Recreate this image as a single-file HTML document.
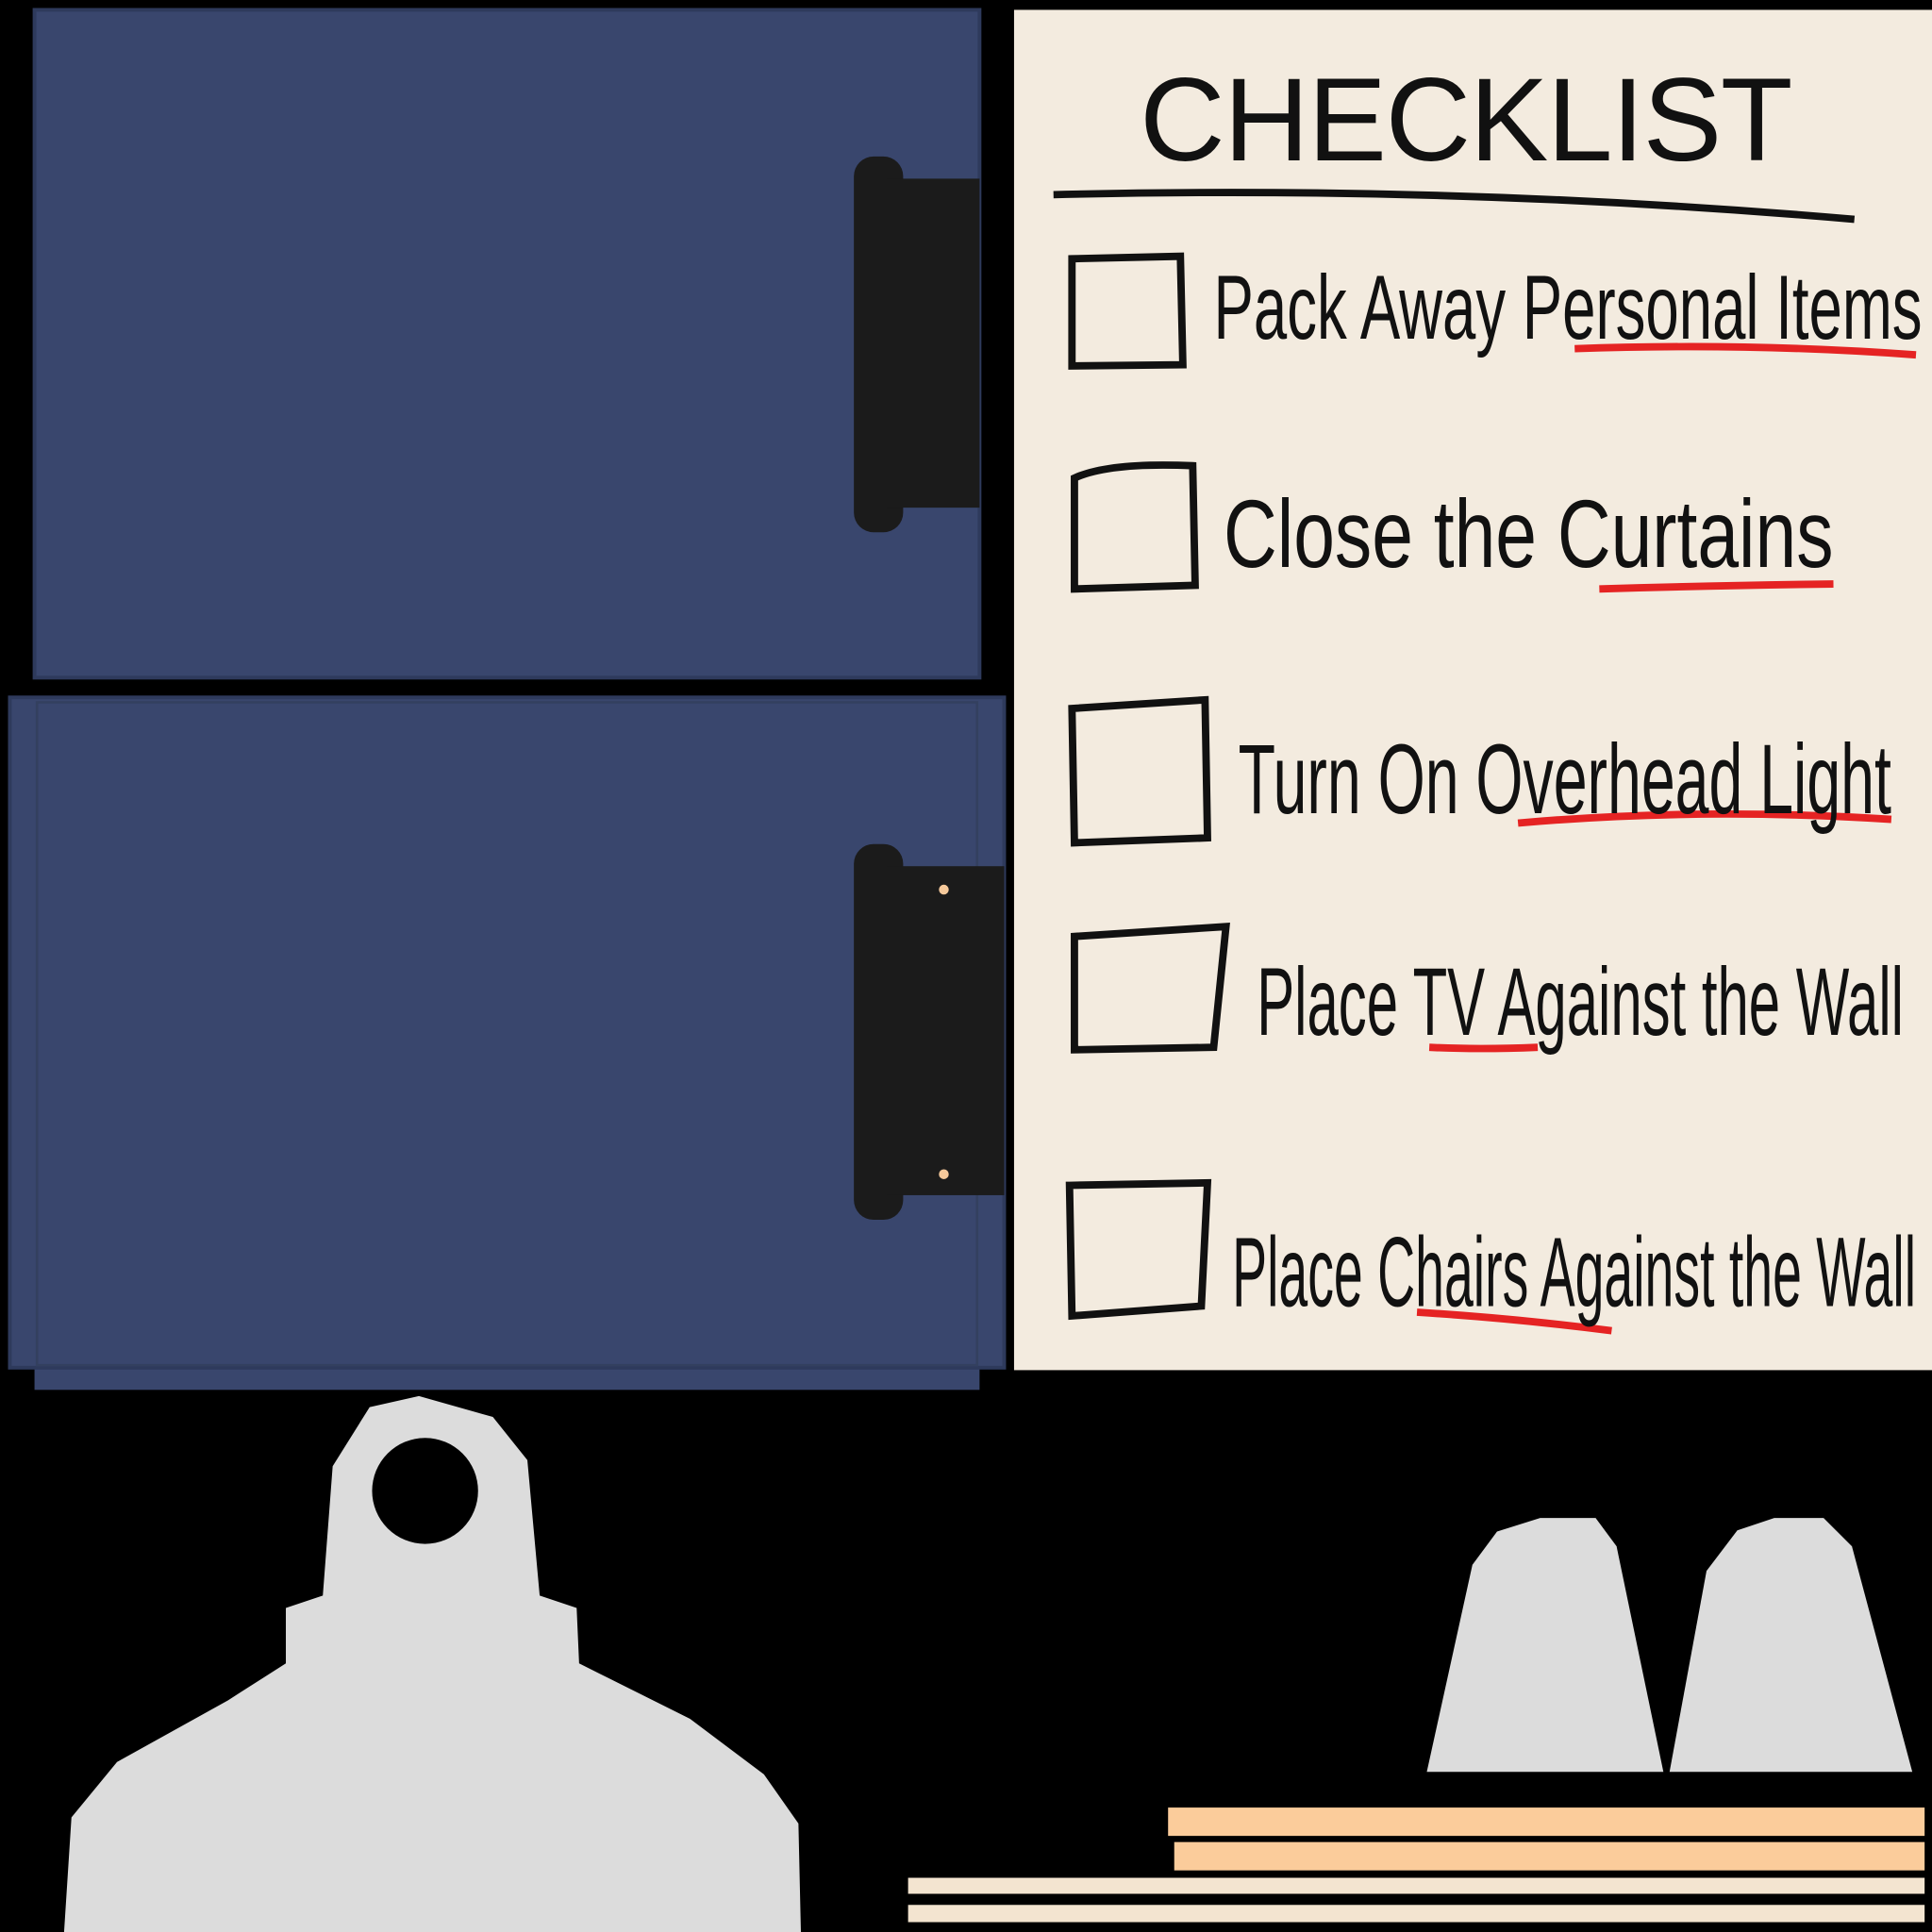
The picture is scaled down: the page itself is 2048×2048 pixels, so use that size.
<!DOCTYPE html>
<html><head><meta charset="utf-8"><style>
html,body{margin:0;padding:0;background:#000;width:2048px;height:2048px;overflow:hidden}
svg{display:block}
text{font-family:"Liberation Sans",sans-serif;fill:#111}
</style></head><body>
<svg width="2048" height="2048" viewBox="0 0 1568 1568" xmlns="http://www.w3.org/2000/svg">
<rect width="1568" height="1568" fill="#000"/>
<!-- blue panels -->
<rect x="28" y="8" width="767" height="542" fill="#39466d" stroke="#2e3a5c" stroke-width="3"/>
<rect x="28" y="1100" width="767" height="28" fill="#39466d"/>
<rect x="8" y="566" width="807" height="544" fill="#39466d" stroke="#2e3a5c" stroke-width="3"/>
<rect x="30" y="570" width="763" height="538" fill="none" stroke="#33405f" stroke-width="2"/>
<!-- black clips -->
<rect x="693" y="127" width="40" height="305" rx="16" fill="#1b1b1b"/>
<rect x="720" y="145" width="75" height="267" fill="#1b1b1b"/>
<rect x="693" y="685" width="40" height="305" rx="16" fill="#1b1b1b"/>
<rect x="720" y="703" width="95" height="267" fill="#1b1b1b"/>
<circle cx="766" cy="722" r="4" fill="#f6c99b"/>
<circle cx="766" cy="953" r="4" fill="#f6c99b"/>
<!-- paper -->
<rect x="823" y="8" width="745" height="1104" fill="#f3ebdf"/>
<text x="925" y="130" font-size="96" textLength="530" lengthAdjust="spacing" style="font-weight:normal">CHECKLIST</text>
<path d="M855 158 Q1180 150 1505 178" stroke="#111" stroke-width="6" fill="none"/>
<g fill="none" stroke="#111" stroke-width="6">
<path d="M870 210 L958 208 L960 296 L870 297 Z"/>
<path d="M872 388 Q900 375 968 378 L970 475 L872 478 Z"/>
<path d="M870 575 L978 568 L980 680 L872 684 Z"/>
<path d="M872 760 L995 752 L985 850 L872 852 Z"/>
<path d="M868 962 L980 960 L975 1060 L870 1068 Z"/>
</g>
<g fill="none" stroke="#e52323" stroke-width="6">
<path d="M1278 283 Q1420 278 1555 288"/>
<path d="M1298 478 Q1400 475 1488 474"/>
<path d="M1232 668 Q1380 655 1535 665"/>
<path d="M1160 850 Q1200 852 1248 850"/>
<path d="M1150 1065 Q1230 1070 1308 1080"/>
</g>
<text x="985" y="275" font-size="74" textLength="575" lengthAdjust="spacingAndGlyphs">Pack Away Personal Items</text>
<text x="993" y="460" font-size="78" textLength="495" lengthAdjust="spacingAndGlyphs">Close the Curtains</text>
<text x="1005" y="660" font-size="80" textLength="530" lengthAdjust="spacingAndGlyphs">Turn On Overhead Light</text>
<text x="1020" y="840" font-size="78" textLength="525" lengthAdjust="spacingAndGlyphs">Place TV Against the Wall</text>
<text x="1000" y="1060" font-size="80" textLength="555" lengthAdjust="spacingAndGlyphs">Place Chairs Against the Wall</text>
<!-- grey clip -->
<path d="M52 1568 L58 1475 L95 1430 L185 1380 L232 1350 L232 1305 L262 1295 L270 1190 L300 1142 L340 1133 L400 1150 L428 1185 L438 1295 L468 1305 L470 1350 L560 1395 L620 1440 L648 1480 L650 1568 Z" fill="#dcdcdc"/>
<circle cx="345" cy="1210" r="43" fill="#000"/>
<path d="M1158 1438 L1195 1270 L1215 1243 L1250 1232 L1295 1232 L1312 1255 L1350 1438 Z" fill="#dcdcdc"/>
<path d="M1355 1438 L1385 1275 L1410 1242 L1440 1232 L1480 1232 L1503 1255 L1552 1438 Z" fill="#dcdcdc"/>
<!-- bars -->
<rect x="948" y="1467" width="614" height="23" fill="#fbcc9b"/>
<rect x="953" y="1495" width="609" height="23" fill="#fbcc9b"/>
<rect x="737" y="1524" width="825" height="13" fill="#f3e4d0"/>
<rect x="737" y="1546" width="825" height="14" fill="#f3e4d0"/>
</svg>
</body></html>
